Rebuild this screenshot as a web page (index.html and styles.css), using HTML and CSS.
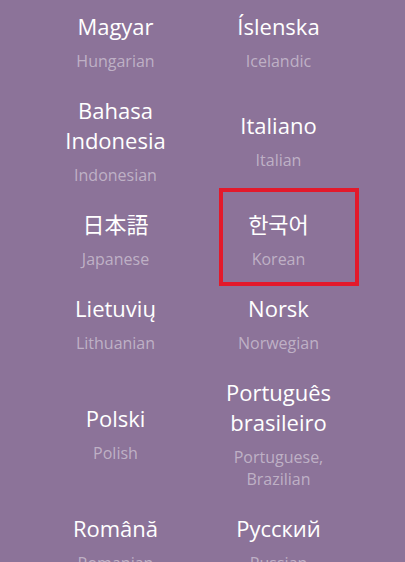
FILE: index.html
```html
<!DOCTYPE html>
<html lang="en">
<head>
    <meta charset="UTF-8">
    <meta name="viewport" content="width=device-width, initial-scale=1.0">
    <title>Languages</title>
    <link rel="stylesheet" href="styles.css">
</head>
<body>
    <div class="languages">
        <div class="lang">
            <div class="name">Magyar</div>
            <div class="english">Hungarian</div>
        </div>
        <div class="lang">
            <div class="name">Íslenska</div>
            <div class="english">Icelandic</div>
        </div>
        <div class="lang">
            <div class="name">Bahasa Indonesia</div>
            <div class="english">Indonesian</div>
        </div>
        <div class="lang">
            <div class="name">Italiano</div>
            <div class="english">Italian</div>
        </div>
        <div class="lang">
            <div class="name">日本語</div>
            <div class="english">Japanese</div>
        </div>
        <div class="lang selected">
            <div class="name">한국어</div>
            <div class="english">Korean</div>
        </div>
        <div class="lang">
            <div class="name">Lietuvių</div>
            <div class="english">Lithuanian</div>
        </div>
        <div class="lang">
            <div class="name">Norsk</div>
            <div class="english">Norwegian</div>
        </div>
        <div class="lang">
            <div class="name">Polski</div>
            <div class="english">Polish</div>
        </div>
        <div class="lang">
            <div class="name">Português brasileiro</div>
            <div class="english">Portuguese, Brazilian</div>
        </div>
        <div class="lang">
            <div class="name">Română</div>
            <div class="english">Romanian</div>
        </div>
        <div class="lang">
            <div class="name">Русский</div>
            <div class="english">Russian</div>
        </div>
    </div>
</body>
</html>
```

FILE: styles.css
```css
* {
    margin: 0;
    padding: 0;
    box-sizing: border-box;
}

body {
    font-family: 'Open Sans', 'Noto Sans CJK KR', 'Noto Sans CJK JP', sans-serif;
    background-color: #8c7399;
    color: #ffffff;
    height: 562px;
    overflow: hidden;
}

.languages {
    display: grid;
    grid-template-columns: 163px 163px;
    margin-top: -1px;
    padding-left: 34px;
}

.lang {
    position: relative;
    display: flex;
    flex-direction: column;
    justify-content: center;
    align-items: center;
    text-align: center;
    padding: 11.5px 8px;
}

.name {
    font-size: 22px;
    line-height: 30px;
}

.english {
    margin-top: 9px;
    font-size: 16px;
    line-height: 22px;
    color: rgba(255, 255, 255, 0.45);
}

/* highlight box */
.selected::after {
    content: '';
    position: absolute;
    top: -9px;
    left: 22px;
    right: 1px;
    bottom: -5px;
    border: 4px solid #e3192b;
}
```
